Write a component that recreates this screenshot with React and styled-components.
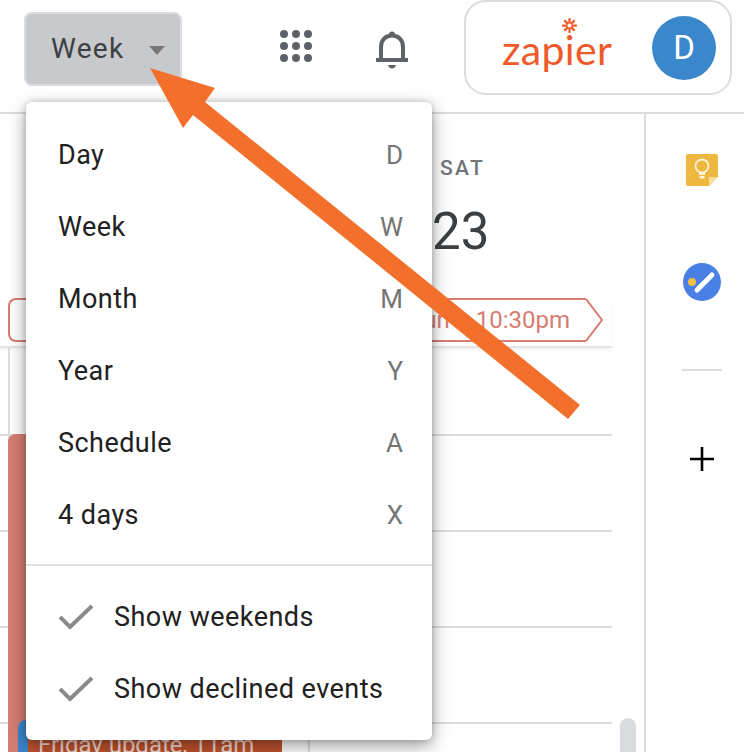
import styled, { createGlobalStyle } from "styled-components";

const menuRows = [
  { label: "Day", key: "D" },
  { label: "Week", key: "W" },
  { label: "Month", key: "M" },
  { label: "Year", key: "Y" },
  { label: "Schedule", key: "A" },
  { label: "4 days", key: "X" },
];

const App = () => {
  return (
    <Page>
      <GlobalStyle />
      <Header>
        <ViewButton>
          Week
          <Caret />
        </ViewButton>
        <IconSlot $left={98}>
          <svg width="32" height="32" viewBox="0 0 32 32" fill="#5f6368">
            {[4, 16, 28].map((y) =>
              [4, 16, 28].map((x) => <circle key={`${x}-${y}`} cx={x} cy={y} r="4" />)
            )}
          </svg>
        </IconSlot>
        <IconSlot $left={64}>
          <svg width="32" height="40" viewBox="0 0 32 40" fill="none">
            <path
              d="M5 29V17C5 10 9.500 5.500 16 5.500S27 10 27 17V29"
              stroke="#5f6368"
              strokeWidth="4"
            />
            <path d="M13 4.500a3 3 0 0 1 6 0V6h-6Z" fill="#5f6368" />
            <rect x="0" y="28" width="32" height="4" fill="#5f6368" />
            <path d="M12 35h8c-.5 2.500-2 3.500-4 3.500s-3.500-1-4-3.500Z" fill="#5f6368" />
          </svg>
        </IconSlot>
        <Account>
          <ZapierLogo>
            <ZapierStar viewBox="0 0 16 16">
              <g stroke="#ef5a2b" strokeWidth="2.400">
                <path d="M8 0v16M0 8h16M2.300 2.300l11.400 11.400M13.700 2.300 2.300 13.700" />
              </g>
              <circle cx="8" cy="8" r="2.200" fill="#fff" />
            </ZapierStar>
            zapier
          </ZapierLogo>
          <Avatar>D</Avatar>
        </Account>
      </Header>

      <Body>
        <Main>
          <DayHead>
            <DayName>SAT</DayName>
            <DayNumber>23</DayNumber>
          </DayHead>
          <AllDayRow>
            <AllDayChip>
              <ChipBox>un 10:30pm</ChipBox>
              <ChipTip viewBox="0 0 18 44">
                <path d="M0 1 16 22 0 43" fill="#fff" stroke="#d67d72" strokeWidth="2" />
              </ChipTip>
            </AllDayChip>
          </AllDayRow>
          <Hours>
            <HourGrid>
              {[0, 1, 2, 3, 4].map((i) => (
                <HourRow key={i} />
              ))}
            </HourGrid>
            <DayLine />
            <WeekLine />
            <SalmonEvent />
            <RustEvent>Friday update, 11am</RustEvent>
            <ScrollThumb />
          </Hours>
        </Main>

        <SidePanel>
          <KeepIcon viewBox="0 0 32 32">
            <path d="M2 0h28a2 2 0 0 1 2 2v21l-9 9H2a2 2 0 0 1-2-2V2a2 2 0 0 1 2-2Z" fill="#eeb73f" />
            <path d="M32 23h-9v9Z" fill="#f7dd9c" />
            <circle cx="16" cy="12" r="6.500" fill="none" stroke="#fdf3d8" strokeWidth="1.800" />
            <path d="M13 18h6v3h-6ZM13.500 22h5v2.500h-5Z" fill="#fdf3d8" />
          </KeepIcon>
          <TasksIcon viewBox="0 0 38 38">
            <circle cx="19" cy="19" r="19" fill="#4a80e6" />
            <path d="M14 27 29 12" stroke="#fff" strokeWidth="5" strokeLinecap="round" />
            <circle cx="9" cy="19" r="4" fill="#f2bd42" />
          </TasksIcon>
          <SideDivider />
          <AddIcon viewBox="0 0 24 24">
            <path d="M12 0v24M0 12h24" stroke="#000" strokeWidth="2.600" />
          </AddIcon>
        </SidePanel>
      </Body>

      <Menu>
        {menuRows.map((row) => (
          <MenuRow key={row.label}>
            <span>{row.label}</span>
            <Shortcut>{row.key}</Shortcut>
          </MenuRow>
        ))}
        <MenuDivider />
        <CheckRow>
          <CheckMark />
          Show weekends
        </CheckRow>
        <CheckRow>
          <CheckMark />
          Show declined events
        </CheckRow>
      </Menu>

      <Arrow viewBox="0 0 744 752">
        <polygon
          points="150,68 215,88 205,102 580,405 568,419 193,115 183,128"
          fill="#f2702b"
        />
      </Arrow>
    </Page>
  );
};

export default App;

const CheckMark = () => (
  <CheckSvg viewBox="0 0 34 26">
    <path d="M1 13 11 23 33 2" fill="none" stroke="#8a8a8a" strokeWidth="4" />
  </CheckSvg>
);

const GlobalStyle = createGlobalStyle`
  html, body {
    margin: 0;
    padding: 0;
    background: #fff;
  }
  * {
    box-sizing: border-box;
  }
`;

const Page = styled.div`
  position: relative;
  width: 744px;
  height: 752px;
  overflow: hidden;
  background: #fff;
  font-family: Roboto, "Liberation Sans", sans-serif;
`;

const Header = styled.header`
  display: flex;
  align-items: flex-start;
  height: 114px;
  padding-left: 24px;
  border-bottom: 2px solid #dadce0;
`;

const ViewButton = styled.div`
  display: flex;
  align-items: center;
  width: 158px;
  height: 74px;
  margin-top: 12px;
  padding: 0 0 2px 25px;
  font-size: 28px;
  letter-spacing: 1.300px;
  color: #3c4043;
  background: #c8c9cc;
  border: 2px solid #dadce0;
  border-radius: 8px;
`;

const Caret = styled.span`
  width: 0;
  height: 0;
  margin: 4px 0 0 24px;
  border-left: 8px solid transparent;
  border-right: 8px solid transparent;
  border-top: 9px solid #777;
`;

const IconSlot = styled.div`
  display: flex;
  margin-left: ${({ $left }) => $left}px;
  margin-top: 30px;
`;

const Account = styled.div`
  display: flex;
  align-items: center;
  justify-content: space-between;
  width: 268px;
  height: 95px;
  margin-left: 56px;
  padding: 0 14px 0 36px;
  border: 2px solid #dadce0;
  border-radius: 22px;
`;

const ZapierLogo = styled.div`
  position: relative;
  margin-top: 4px;
  font-family: Lato, "Open Sans", sans-serif;
  font-size: 41px;
  letter-spacing: 0.3px;
  line-height: 48px;
  color: #ef5a2b;
`;

const ZapierStar = styled.svg`
  position: absolute;
  left: 60px;
  top: -8px;
  width: 15px;
  height: 15px;
  background: #fff;
  border-radius: 50%;
`;

const Avatar = styled.div`
  display: flex;
  align-items: center;
  justify-content: center;
  width: 64px;
  height: 64px;
  font-size: 33px;
  color: #fff;
  background: #3b87cc;
  border-radius: 50%;
`;

const Body = styled.div`
  display: flex;
  height: 638px;
`;

const Main = styled.main`
  display: flex;
  flex-direction: column;
  width: 646px;
  border-right: 2px solid #dadce0;
`;

const DayHead = styled.div`
  display: flex;
  flex-direction: column;
  align-items: flex-start;
  height: 184px;
  padding: 42px 0 0 432px;
`;

const DayName = styled.div`
  margin-left: 8px;
  font-size: 21px;
  font-weight: 500;
  letter-spacing: 2.300px;
  line-height: 24px;
  color: #70757a;
`;

const DayNumber = styled.div`
  margin-top: 21px;
  font-size: 51px;
  line-height: 62px;
  color: #3c4043;
`;

const AllDayRow = styled.div`
  width: 612px;
  height: 50px;
  padding-left: 8px;
  border-bottom: 2px solid #e4e4e6;
  box-shadow: 0 2px 3px rgba(0, 0, 0, 0.05);
`;

const AllDayChip = styled.div`
  display: flex;
  width: 596px;
  height: 44px;
`;

const ChipBox = styled.div`
  flex: 1;
  display: flex;
  align-items: center;
  justify-content: flex-end;
  padding-right: 16px;
  font-size: 24px;
  word-spacing: 20px;
  color: #d67d72;
  border: 2px solid #d67d72;
  border-right: 0;
  border-radius: 8px 0 0 8px;
`;

const ChipTip = styled.svg`
  width: 18px;
  height: 44px;
`;

const Hours = styled.div`
  position: relative;
  flex: 1;
  overflow: hidden;
`;

const HourGrid = styled.div`
  display: flex;
  flex-direction: column;
  width: 612px;
  padding-top: 86px;
`;

const HourRow = styled.div`
  height: 96px;
  border-top: 2px solid #dadce0;
`;

const DayLine = styled.div`
  position: absolute;
  left: 8px;
  top: 0;
  bottom: 0;
  width: 2px;
  background: #dadce0;
`;

const WeekLine = styled.div`
  position: absolute;
  left: 308px;
  top: 0;
  bottom: 0;
  width: 2px;
  background: #dadce0;
`;

const SalmonEvent = styled.div`
  position: absolute;
  left: 8px;
  top: 86px;
  bottom: 0;
  width: 274px;
  background: #d67d72;
  border-radius: 8px 8px 0 0;
`;

const RustEvent = styled.div`
  position: absolute;
  left: 18px;
  top: 372px;
  bottom: 0;
  width: 264px;
  padding: 11px 0 0 10px;
  font-size: 24px;
  line-height: 28px;
  white-space: nowrap;
  color: #f3d9cf;
  background: #c0532f;
  border-left: 10px solid #3b87cc;
  border-radius: 8px 0 0 0;
`;

const ScrollThumb = styled.div`
  position: absolute;
  left: 620px;
  top: 370px;
  bottom: 0;
  width: 16px;
  background: #dadce0;
  border-radius: 8px 8px 0 0;
`;

const SidePanel = styled.aside`
  display: flex;
  flex: 1;
  flex-direction: column;
  align-items: center;
  padding: 40px 0 0 14px;
`;

const KeepIcon = styled.svg`
  width: 32px;
  height: 32px;
`;

const TasksIcon = styled.svg`
  width: 38px;
  height: 38px;
  margin-top: 77px;
`;

const SideDivider = styled.div`
  width: 40px;
  height: 2px;
  margin-top: 68px;
  background: #dadce0;
`;

const AddIcon = styled.svg`
  width: 24px;
  height: 24px;
  margin-top: 76px;
`;

const Menu = styled.div`
  position: absolute;
  left: 26px;
  top: 102px;
  width: 406px;
  height: 638px;
  padding-top: 17px;
  background: #fff;
  border-radius: 6px;
  box-shadow: 0 6px 18px rgba(0, 0, 0, 0.38), 0 0 6px rgba(0, 0, 0, 0.18);
`;

const MenuRow = styled.div`
  display: flex;
  align-items: center;
  justify-content: space-between;
  height: 72px;
  padding: 0 29px 0 32px;
  font-size: 27px;
  letter-spacing: 0.45px;
  color: #212121;
`;

const Shortcut = styled.span`
  font-size: 26px;
  letter-spacing: 0;
  color: #757575;
`;

const MenuDivider = styled.div`
  height: 2px;
  margin: 13px 0 15px;
  background: #e0e0e0;
`;

const CheckRow = styled.div`
  display: flex;
  align-items: center;
  height: 72px;
  padding-left: 33px;
  font-size: 27px;
  letter-spacing: 0.45px;
  color: #212121;
`;

const CheckSvg = styled.svg`
  width: 34px;
  height: 26px;
  margin-right: 21px;
`;

const Arrow = styled.svg`
  position: absolute;
  left: 0;
  top: 0;
  width: 744px;
  height: 752px;
  pointer-events: none;
`;
